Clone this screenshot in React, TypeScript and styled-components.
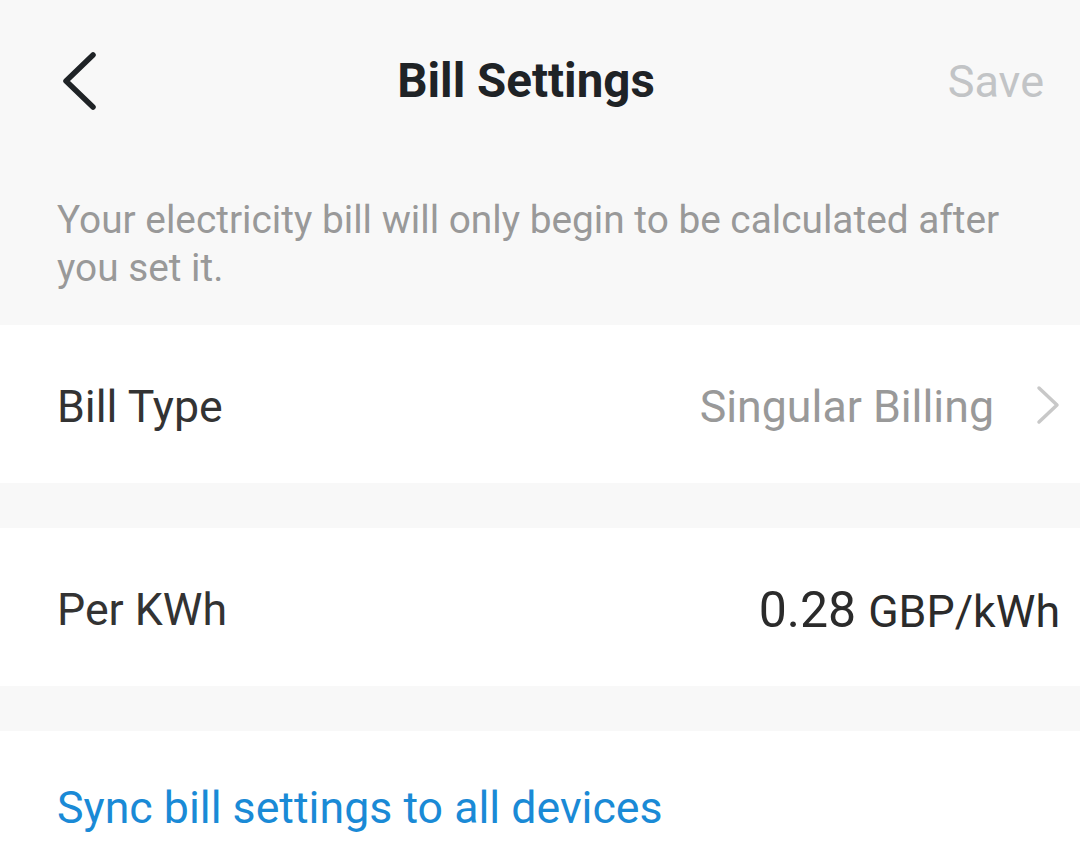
import React from "react";
import styled, { createGlobalStyle } from "styled-components";

const Global = createGlobalStyle`
  html, body { margin: 0; padding: 0; background: #f8f8f8; }
  body { font-family: Roboto, "Noto Sans", Arial, sans-serif; -webkit-font-smoothing: antialiased; }
`;

const Page = styled.div`
  width: 1080px;
  height: 864px;
  overflow: hidden;
  background: #f8f8f8;
  display: flex;
  flex-direction: column;
`;

const Header = styled.div`
  height: 160px;
  display: grid;
  grid-template-columns: 1fr auto 1fr;
  align-items: center;
  padding: 2px 36px 0 62px;
  box-sizing: border-box;
`;

const BackButton = styled.button`
  border: none;
  background: none;
  padding: 0;
  width: 40px;
  height: 60px;
  display: flex;
  align-items: center;
  cursor: pointer;
`;

const Title = styled.h1`
  margin: 0 54px 0 0;
  text-align: center;
  font-size: 47.5px;
  font-weight: 700;
  color: #1f2326;
`;

const SaveButton = styled.button`
  justify-self: end;
  border: none;
  background: none;
  padding: 0;
  font-family: inherit;
  font-size: 45px;
  color: #c2c4c6;
`;

const Notice = styled.p`
  margin: 0;
  padding: 36px 57px 33px;
  font-size: 38.8px;
  line-height: 48px;
  color: #999999;
`;

const Card = styled.div<{ $height: number }>`
  background: #ffffff;
  height: ${(p) => p.$height}px;
  display: flex;
  align-items: center;
  padding: 5px 20px 0 57px;
  box-sizing: border-box;
`;

const Spacer = styled.div`
  height: 45px;
  flex: none;
`;

const Label = styled.span`
  font-size: 44.7px;
  color: #333333;
  flex: 1;
`;

const Value = styled.span`
  font-size: 44.7px;
  color: #999999;
`;

const Chevron = styled.span`
  display: flex;
  margin-left: 42px;
  margin-top: -4px;
`;

const Amount = styled.span`
  display: flex;
  align-items: baseline;
  gap: 12px;
  color: #2b2b2b;
`;

const Number = styled.span`
  font-size: 50px;
`;

const Unit = styled.span`
  font-size: 44.7px;
`;

const SyncCard = styled.div`
  background: #ffffff;
  flex: 1;
  padding: 51px 57px 0;
`;

const SyncLink = styled.a`
  font-size: 44.7px;
  color: #1a8ad6;
  text-decoration: none;
`;

export default function App() {
  return (
    <Page>
      <Global />
      <Header>
        <BackButton aria-label="Back">
          <svg width="36" height="60" viewBox="0 0 36 60" fill="none">
            <path d="M31 4 L4 30 L31 56" stroke="#1f2326" strokeWidth="5.5" strokeLinecap="round" strokeLinejoin="round" />
          </svg>
        </BackButton>
        <Title>Bill Settings</Title>
        <SaveButton>Save</SaveButton>
      </Header>
      <Notice>Your electricity bill will only begin to be calculated after you set it.</Notice>
      <Card $height={158}>
        <Label>Bill Type</Label>
        <Value>Singular Billing</Value>
        <Chevron>
          <svg width="24" height="40" viewBox="0 0 24 40" fill="none">
            <path d="M3 3 L21 20 L3 37" stroke="#c8c8c8" strokeWidth="3.5" strokeLinecap="round" strokeLinejoin="round" />
          </svg>
        </Chevron>
      </Card>
      <Spacer />
      <Card $height={158}>
        <Label>Per KWh</Label>
        <Amount>
          <Number>0.28</Number>
          <Unit>GBP/kWh</Unit>
        </Amount>
      </Card>
      <Spacer />
      <SyncCard>
        <SyncLink href="#">Sync bill settings to all devices</SyncLink>
      </SyncCard>
    </Page>
  );
}
